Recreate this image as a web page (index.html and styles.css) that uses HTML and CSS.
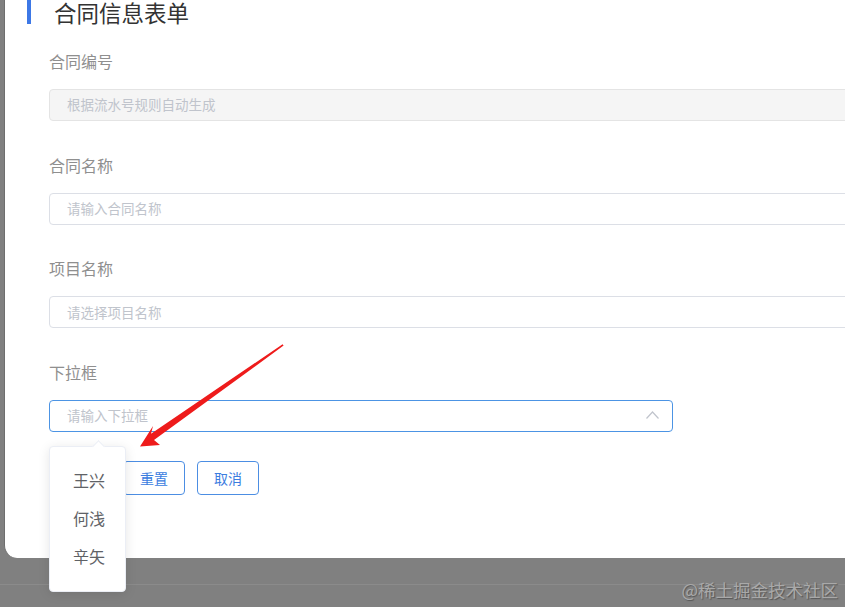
FILE: index.html
```html
<!DOCTYPE html>
<html lang="zh-CN">
<head>
<meta charset="utf-8">
<title>合同信息表单</title>
<link rel="stylesheet" href="styles.css">
</head>
<body>
<div class="screen">
  <div class="card">
    <div class="title-row">
      <span class="bar"></span>
      <h1 class="title">合同信息表单</h1>
    </div>
    <div class="form">
      <div class="field">
        <div class="label">合同编号</div>
        <div class="input disabled"><span class="ph">根据流水号规则自动生成</span></div>
      </div>
      <div class="field">
        <div class="label">合同名称</div>
        <div class="input"><span class="ph">请输入合同名称</span></div>
      </div>
      <div class="field">
        <div class="label">项目名称</div>
        <div class="input"><span class="ph">请选择项目名称</span></div>
      </div>
      <div class="field last">
        <div class="label">下拉框</div>
        <div class="input select focus">
          <span class="ph">请输入下拉框</span>
          <svg class="chev" width="13" height="8" viewBox="0 0 13 8"><polyline points="0.5,7.5 6.5,1 12.5,7.5" fill="none" stroke="#c0c4cc" stroke-width="1.2"/></svg>
        </div>
      </div>
      <div class="actions">
        <span class="btn-slot"></span>
        <button class="btn">重置</button>
        <button class="btn">取消</button>
      </div>
    </div>
    <div class="popup">
      <span class="caret"></span>
      <ul class="options">
        <li>王兴</li>
        <li>何浅</li>
        <li>辛矢</li>
      </ul>
    </div>
  </div>
  <div class="under"></div>
  <svg class="annot" width="845" height="607" viewBox="0 0 845 607">
    <polygon points="282.6,344.2 151,433.8 153,426 140,446.5 160,445 154,440 283.6,345.6" fill="#ee1b1b"/>
  </svg>
  <div class="watermark">@稀土掘金技术社区</div>
</div>
</body>
</html>
```
FILE: styles.css
```css
html, body {
  margin: 0;
  padding: 0;
}
body {
  background: #808080;
  font-family: "Noto Sans CJK SC", "Noto Sans", sans-serif;
  overflow: hidden;
}
.screen {
  position: relative;
  width: 845px;
  height: 607px;
  overflow: hidden;
  background: #808080;
}
.card {
  position: relative;
  margin-left: 4px;
  width: 1000px;
  height: 558px;
  background: #fff;
  border-left: 1px solid #6e6e6e;
  border-bottom-left-radius: 13px;
  box-sizing: border-box;
  padding-left: 22px;
}
.title-row {
  display: flex;
  align-items: center;
  height: 24px;
}
.bar {
  width: 4px;
  height: 24px;
  background: #3d78e6;
}
.title {
  margin: -1px 0 0 23px;
  font-size: 22.5px;
  line-height: 24px;
  font-weight: 400;
  color: #333;
}
.form {
  margin-left: 22px;
  padding-top: 29px;
}
.field {
  margin-bottom: 35.7px;
}
.field.last {
  margin-bottom: 29px;
}
.label {
  font-size: 16px;
  line-height: 16px;
  color: #8f8f8f;
  margin-bottom: 20px;
}
.input {
  height: 32px;
  box-sizing: border-box;
  border: 1px solid #dcdfe6;
  border-radius: 4px;
  background: #fff;
  display: flex;
  align-items: center;
  padding-left: 17px;
}
.input.disabled {
  background: #f5f5f5;
  border-color: #e4e4e4;
}
.input.select {
  width: 624px;
  justify-content: space-between;
  padding-right: 13px;
}
.input.focus {
  border-color: #4c94e4;
}
.ph {
  font-size: 13.5px;
  color: #c0c4cc;
  line-height: 1;
}
.chev {
  display: block;
  margin-top: -2px;
}
.actions {
  display: flex;
  gap: 12px;
}
.btn-slot {
  width: 62px;
  height: 34px;
}
.btn {
  width: 62px;
  height: 34px;
  box-sizing: border-box;
  border: 1px solid #4c8ee3;
  border-radius: 4px;
  background: #fff;
  color: #3b7ddf;
  font-family: "Noto Sans CJK SC", sans-serif;
  font-size: 14px;
  padding: 0;
}
.popup {
  position: absolute;
  left: 44px;
  top: 446px;
  width: 77px;
  height: 146px;
  background: #fff;
  border: 1px solid #ebeef5;
  box-sizing: border-box;
  border-radius: 4px;
  box-shadow: 0 2px 12px rgba(0, 0, 0, 0.1);
}
.caret {
  position: absolute;
  top: -5px;
  left: 44px;
  width: 8px;
  height: 8px;
  background: #fff;
  border-top: 1px solid #ebeef5;
  border-left: 1px solid #ebeef5;
  transform: rotate(45deg);
}
.options {
  list-style: none;
  margin: 0;
  padding: 14px 0 15px;
}
.options li {
  height: 38px;
  line-height: 38px;
  padding-left: 23px;
  font-size: 16px;
  color: #606266;
}
.under {
  margin-top: 26px;
  height: 0;
  border-top: 1px solid #8b8b8b;
}
.annot {
  position: absolute;
  left: 0;
  top: 0;
  pointer-events: none;
}
.watermark {
  position: absolute;
  right: 7px;
  bottom: 7px;
  font-size: 17.5px;
  line-height: 20px;
  color: #a9a9a9;
  text-shadow: 1px 1px 1px #555;
}
```
